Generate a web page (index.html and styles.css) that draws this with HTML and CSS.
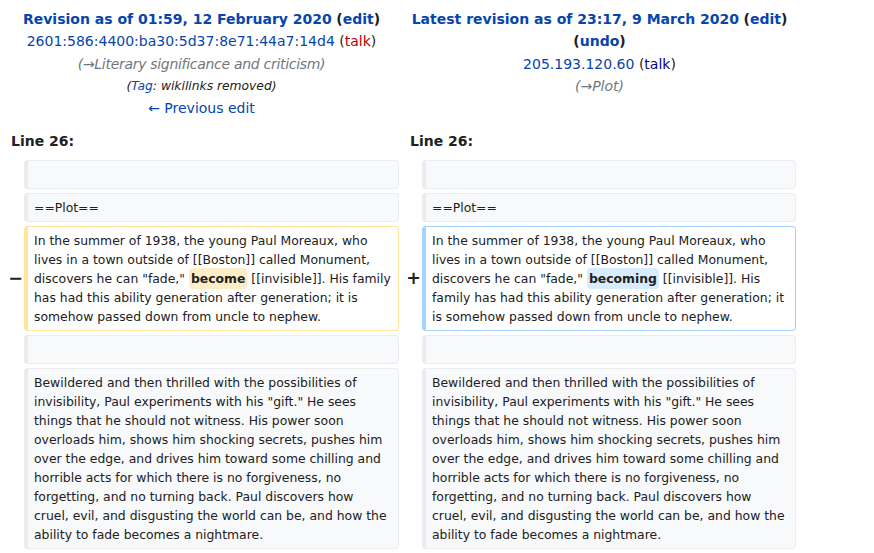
FILE: index.html
```html
<!DOCTYPE html>
<html>
<head>
<meta charset="utf-8">
<link rel="stylesheet" href="styles.css">
</head>
<body>
<div class="diff">
  <div class="title">
    <div class="rev"><a class="strong" href="#">Revision as of 01:59, 12 February 2020</a> <span class="strong">(<a href="#">edit</a>)</span></div>
    <div><a href="#">2601:586:4400:ba30:5d37:8e71:44a7:14d4</a> (<a class="new" href="#">talk</a>)</div>
    <div class="comment tight">(<a class="arrow" href="#">→</a>Literary significance and criticism)</div>
    <div class="tags">(<a href="#">Tag</a>: wikilinks removed)</div>
    <div><a href="#">← Previous edit</a></div>
  </div>
  <div class="title">
    <div class="rev"><a class="strong" href="#">Latest revision as of 23:17, 9 March 2020</a> <span class="strong">(<a href="#">edit</a>)</span> <span class="strong">(<a href="#">undo</a>)</span></div>
    <div><a href="#">205.193.120.60</a> (<a class="visited" href="#">talk</a>)</div>
    <div class="comment">(<a class="arrow" href="#">→</a>Plot)</div>
  </div>

  <div class="lineno">Line 26:</div>
  <div class="lineno">Line 26:</div>

  <div class="marker"></div>
  <div class="line context"><br></div>
  <div class="marker"></div>
  <div class="line context"><br></div>

  <div class="marker"></div>
  <div class="line context">==Plot==</div>
  <div class="marker"></div>
  <div class="line context">==Plot==</div>

  <div class="marker">−</div>
  <div class="line deleted">In the summer of 1938, the young Paul Moreaux, who lives in a town outside of [[Boston]] called Monument, discovers he can "fade," <span class="change">become</span> [[invisible]]. His family has had this ability generation after generation; it is somehow passed down from uncle to nephew.</div>
  <div class="marker">+</div>
  <div class="line added">In the summer of 1938, the young Paul Moreaux, who lives in a town outside of [[Boston]] called Monument, discovers he can "fade," <span class="change">becoming</span> [[invisible]]. His family has had this ability generation after generation; it is somehow passed down from uncle to nephew.</div>

  <div class="marker"></div>
  <div class="line context"><br></div>
  <div class="marker"></div>
  <div class="line context"><br></div>

  <div class="marker"></div>
  <div class="line context">Bewildered and then thrilled with the possibilities of invisibility, Paul experiments with his "gift." He sees things that he should not witness. His power soon overloads him, shows him shocking secrets, pushes him over the edge, and drives him toward some chilling and horrible acts for which there is no forgiveness, no forgetting, and no turning back. Paul discovers how cruel, evil, and disgusting the world can be, and how the ability to fade becomes a nightmare.</div>
  <div class="marker"></div>
  <div class="line context">Bewildered and then thrilled with the possibilities of invisibility, Paul experiments with his "gift." He sees things that he should not witness. His power soon overloads him, shows him shocking secrets, pushes him over the edge, and drives him toward some chilling and horrible acts for which there is no forgiveness, no forgetting, and no turning back. Paul discovers how cruel, evil, and disgusting the world can be, and how the ability to fade becomes a nightmare.</div>
</div>
</body>
</html>
```

FILE: styles.css
```css
html, body {
  margin: 0;
  padding: 0;
  background: #ffffff;
}
body {
  font-family: "DejaVu Sans", sans-serif;
  font-size: 14px;
  color: #202122;
}
a {
  color: #0645ad;
  text-decoration: none;
}
a.new {
  color: #ba0000;
}
a.visited {
  color: #0b0080;
}
.diff {
  display: grid;
  grid-template-columns: 16px 375px 15px 374px;
  column-gap: 4px;
  row-gap: 4px;
  padding: 4px 0 4px 4px;
}
.title {
  grid-column: span 2;
  text-align: center;
  line-height: 22.3px;
  padding: 4px 7px 3px;
}
.strong {
  font-weight: bold;
}
.comment {
  font-style: italic;
  color: #72777d;
}
.comment.tight {
  letter-spacing: -0.3px;
}
.comment .arrow {
  color: #72777d;
}
.tags {
  font-style: italic;
  font-size: 12.3px;
}
.lineno {
  grid-column: span 2;
  font-weight: bold;
  line-height: 21px;
  padding: 5px 7px 4px;
}
.marker {
  align-self: center;
  text-align: right;
  font-weight: bold;
  font-size: 17.5px;
  line-height: 1.2;
  margin-right: -3px;
}
.line {
  font-size: 12.4px;
  line-height: 19px;
  white-space: pre-wrap;
  word-wrap: break-word;
  border-style: solid;
  border-width: 1px 1px 1px 4px;
  border-radius: 4px;
  padding: 4px 6px;
}
.context {
  background: #f8f9fa;
  border-color: #eaecf0;
}
.deleted {
  background: #ffffff;
  border-color: #ffe49c;
}
.added {
  background: #ffffff;
  border-color: #a3d3ff;
}
.change {
  font-weight: bold;
  border-radius: 4px;
  padding: 3px 2px;
}
.deleted .change {
  background: #feeec8;
}
.added .change {
  background: #d8ecff;
}
```
